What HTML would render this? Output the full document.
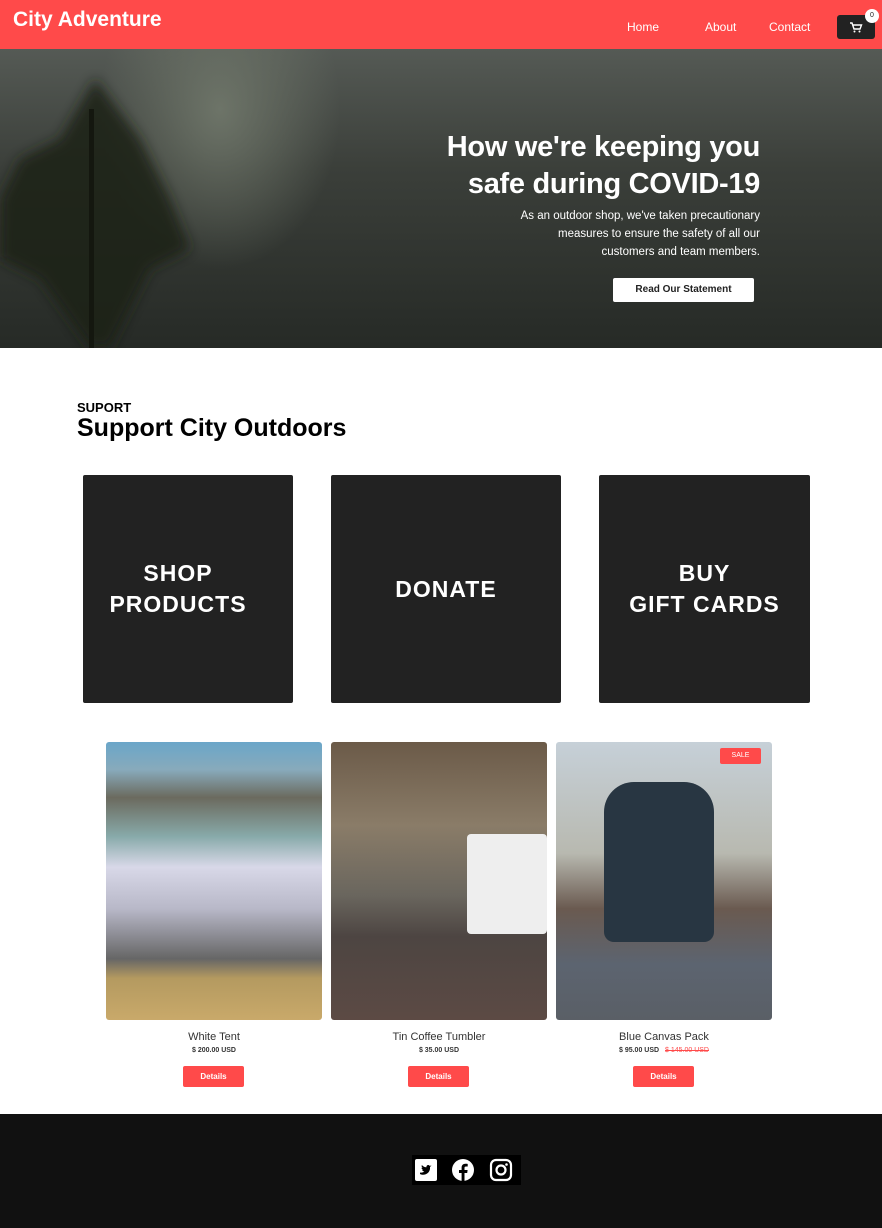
<!DOCTYPE html>
<html><head><meta charset="utf-8"><style>
*{margin:0;padding:0;box-sizing:border-box}
body{width:882px;height:1228px;background:#fff;font-family:"Liberation Sans",sans-serif;position:relative;overflow:hidden}
.nav{position:absolute;left:0;top:0;width:882px;height:49px;background:#ff4a4a}
.logo{position:absolute;left:13px;top:8px;color:#fff;font-weight:bold;font-size:21px}
.nl{position:absolute;top:20px;color:#fff;font-size:12px}
.cart{position:absolute;left:837px;top:15px;width:38px;height:24px;background:#222;border-radius:3px}
.badge{position:absolute;left:865px;top:9px;width:14px;height:14px;border-radius:7px;background:#fff;font-size:7px;text-align:center;line-height:14px;color:#222}
.hero{position:absolute;left:0;top:49px;width:882px;height:299px;overflow:hidden;background:
radial-gradient(ellipse 120px 160px at 220px 60px,#6d7468 0%,rgba(90,96,88,0) 100%),
linear-gradient(180deg,#555a55 0%,#3b3f3a 40%,#262a26 100%)}
.h1{position:absolute;right:122px;top:80px;color:#fff;font-size:29px;font-weight:bold;text-align:right;line-height:37px;letter-spacing:-0.3px}
.hp{position:absolute;right:122px;top:158px;color:#fff;font-size:11.5px;text-align:right;line-height:18px;width:320px}
.hb{position:absolute;left:613px;top:229px;width:141px;height:24px;background:#fff;border-radius:2px;font-size:10px;font-weight:bold;text-align:center;line-height:24px;color:#222}
.sup{position:absolute;left:77px;top:400px;font-size:13px;font-weight:bold}
.st{position:absolute;left:77px;top:414px;font-size:25px;font-weight:bold}
.box{position:absolute;top:475px;height:228px;background:#222;border-radius:2px;color:#fff;font-weight:bold;font-size:23px;letter-spacing:1px;display:flex;align-items:center;justify-content:center;text-align:center;line-height:31px}
.prod{position:absolute;top:742px;width:216px;height:278px;border-radius:3px;overflow:hidden}
.pn{position:absolute;top:1031px;width:216px;text-align:center;font-size:11px;color:#333}
.pp{position:absolute;top:1047px;width:216px;text-align:center;font-size:7px;font-weight:bold;color:#333}
.pp s{color:#ff4a4a;margin-left:4px;font-weight:normal}
.db{position:absolute;top:1066px;width:61px;height:21px;background:#ff4a4a;border-radius:2px;color:#fff;font-size:8px;font-weight:bold;text-align:center;line-height:21px}
.foot{position:absolute;left:0;top:1114px;width:882px;height:114px;background:#111}
.ic{position:absolute;left:412px;top:1155px;width:109px;height:30px;background:#000}
</style></head><body>
<div class="nav"><div class="logo">City Adventure</div>
<div class="nl" style="left:627px">Home</div><div class="nl" style="left:705px">About</div><div class="nl" style="left:769px">Contact</div>
<div class="cart"><svg width="38" height="24" viewBox="0 0 38 24"><path d="M13 8h2l2 6h6l1.5-4H16" fill="none" stroke="#fff" stroke-width="1.4"/><circle cx="17.5" cy="16.5" r="1" fill="#fff"/><circle cx="22.5" cy="16.5" r="1" fill="#fff"/></svg></div>
<div class="badge">0</div></div>
<div class="hero">
<svg width="882" height="299" style="position:absolute;left:0;top:0"><defs><filter id="b"><feGaussianBlur stdDeviation="6"/></filter></defs>
<path d="M95 30 L60 90 L20 110 L0 150 L0 210 L40 230 L90 299 L110 299 L150 220 L190 200 L170 150 L140 90 Z" fill="#1a2016" opacity=".85" filter="url(#b)"/>
<rect x="89" y="60" width="5" height="239" fill="#14170f"/></svg>
<div class="h1">How we're keeping you<br>safe during COVID-19</div>
<div class="hp">As an outdoor shop, we've taken precautionary<br>measures to ensure the safety of all our<br>customers and team members.</div>
<div class="hb">Read Our Statement</div></div>
<div class="sup">SUPORT</div><div class="st">Support City Outdoors</div>
<div class="box" style="left:83px;width:210px;padding-right:20px">SHOP<br>PRODUCTS</div>
<div class="box" style="left:331px;width:230px">DONATE</div>
<div class="box" style="left:599px;width:211px">BUY<br>GIFT CARDS</div>
<div class="prod" style="left:106px;background:linear-gradient(180deg,#6aa6c9 0%,#8ab 10%,#6b6a5e 20%,#8aa 34%,#d8d8e8 45%,#b8b8c8 60%,#666 78%,#b49a60 85%,#c9a96a 100%)"></div>
<div class="prod" style="left:331px;background:linear-gradient(180deg,#6b5a48 0%,#8a7c68 30%,#6a665e 55%,#4d4542 70%,#5c4a44 100%)"><div style="position:absolute;left:136px;top:92px;width:80px;height:100px;background:#eee;border-radius:4px"></div></div>
<div class="prod" style="left:556px;background:linear-gradient(180deg,#c6d0d8 0%,#b8b9b0 40%,#6a5a50 60%,#5c6470 80%,#5a5f66 100%)"><div style="position:absolute;left:48px;top:40px;width:110px;height:160px;background:#283642;border-radius:30px 30px 10px 10px"></div><div style="position:absolute;left:164px;top:6px;width:41px;height:16px;background:#ff4a4a;border-radius:2px;color:#fff;font-size:7px;text-align:center;line-height:16px">SALE</div></div>
<div class="pn" style="left:106px">White Tent</div><div class="pp" style="left:106px">$ 200.00 USD</div><div class="db" style="left:183px">Details</div>
<div class="pn" style="left:331px">Tin Coffee Tumbler</div><div class="pp" style="left:331px">$ 35.00 USD</div><div class="db" style="left:408px">Details</div>
<div class="pn" style="left:556px">Blue Canvas Pack</div><div class="pp" style="left:556px">$ 95.00 USD <s>$ 145.00 USD</s></div><div class="db" style="left:633px">Details</div>
<div class="foot"></div>
<div class="ic"><svg width="109" height="30" viewBox="0 0 109 30">
<rect x="3" y="4" width="22" height="22" rx="2" fill="#fff"/><path d="M8 19c4 2 9 0 10-5v-2l1.5-1.5-1.8.4c-1-1.5-3.5-1-3.3 1.4-2 0-3.5-1-4.5-2.300-.6 1.3 0 2.6.8 3-.6 0-1-.2-1.2-.4 0 1.2.8 2 1.8 2.3-.5.1-.8.1-1.2 0 .3 1 1.2 1.6 2.2 1.6-1 .9-2.4 1.3-4.3 1z" fill="#000"/>
<circle cx="51" cy="15" r="11" fill="#fff"/><path d="M52.5 26v-8h2.7l.4-3h-3.1v-2c0-.9.3-1.5 1.6-1.5h1.6V8.9c-.3 0-1.2-.1-2.3-.1-2.3 0-3.8 1.4-3.8 3.9V15h-2.6v3h2.6v8z" fill="#000"/>
<rect x="79" y="5" width="20" height="20" rx="5" fill="none" stroke="#fff" stroke-width="2.2"/><circle cx="89" cy="15" r="4.5" fill="none" stroke="#fff" stroke-width="2.2"/><circle cx="94.5" cy="9.5" r="1.3" fill="#fff"/>
</svg></div>
</body></html>
